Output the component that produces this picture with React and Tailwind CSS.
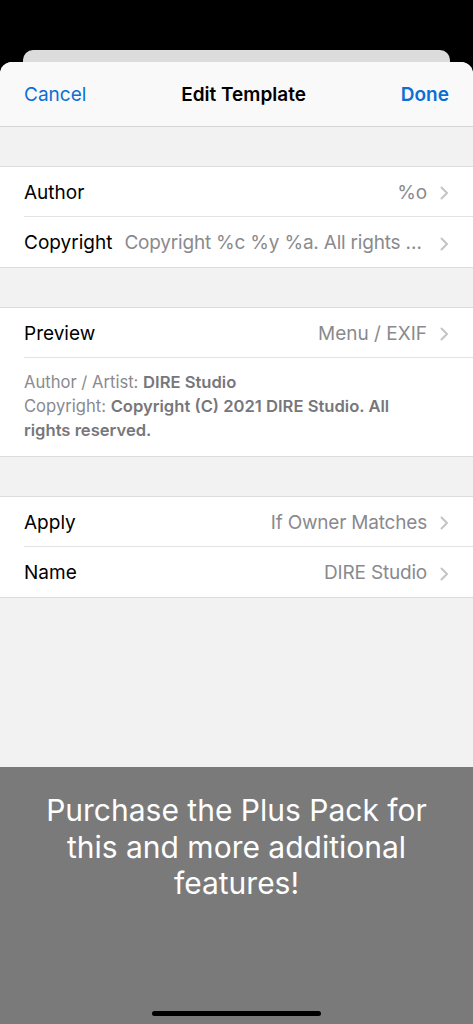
import React from 'react';

const Chevron = () => (
  <svg width="9" height="14" viewBox="0 0 9 14" className="ml-[13px] shrink-0" fill="none">
    <path d="M1.5 1.5L7 7l-5.5 5.5" stroke="#c4c4c7" strokeWidth="2" strokeLinecap="round" strokeLinejoin="round" />
  </svg>
);

const Row = ({ label, value, last }) => (
  <div className="flex h-[50px] items-center pl-6">
    <div className={`flex h-full min-w-0 flex-1 items-center pr-[24px] pt-[3px] ${last ? '' : 'border-b border-[#e3e3e6]'}`}>
      <span className="shrink-0 text-[19px] text-black">{label}</span>
      <span className="ml-3 min-w-0 flex-1 truncate text-right text-[19px] tracking-[-0.2px] text-[#8a8a8e]">{value}</span>
      <Chevron />
    </div>
  </div>
);

const Group = ({ children }) => (
  <div className="border-y border-[#dcdcdf] bg-white">{children}</div>
);

const App = () => {
  return (
    <div
      className="relative flex h-[1024px] w-[473px] flex-col overflow-hidden bg-black"
      style={{ fontFamily: 'Inter, "Liberation Sans", sans-serif' }}
    >
      <div className="mx-[23px] mt-[50px] h-[20px] rounded-t-[10px] bg-[#dcdcdc]" />
      <div className="-mt-[8px] flex flex-1 flex-col overflow-hidden rounded-t-[12px] bg-[#f2f2f2]">
        <div className="flex h-[65px] items-center justify-between border-b border-[#d6d6d8] bg-[#f9f9f9] px-6 pt-[3px]">
          <span className="text-[19px] text-[#0b6fd4]">Cancel</span>
          <span className="text-[19px] font-semibold text-black">Edit Template</span>
          <span className="text-[19px] font-semibold text-[#0b6fd4]">Done</span>
        </div>
        <div className="h-[39px]" />
        <Group>
          <Row label="Author" value="%o" />
          <Row label="Copyright" value="Copyright %c %y %a. All rights reserved." last />
        </Group>
        <div className="h-[39px]" />
        <Group>
          <div className="pl-6">
            <div className="flex h-[50px] items-center border-b border-[#e3e3e6] pr-[24px] pt-[3px]">
              <span className="text-[19px] text-black">Preview</span>
              <span className="flex-1 text-right text-[19px] text-[#8a8a8e]">Menu / EXIF</span>
              <Chevron />
            </div>
            <div className="pb-[14px] pr-[50px] pt-[12px] text-[16.6px] leading-[24px] text-[#8a8a8e]">
              Author / Artist: <span className="font-semibold text-[#77777b]">DIRE Studio</span>
              <br />
              Copyright: <span className="font-semibold text-[#77777b]">Copyright (C) 2021 DIRE Studio. All rights reserved.</span>
            </div>
          </div>
        </Group>
        <div className="h-[39px]" />
        <Group>
          <Row label="Apply" value="If Owner Matches" />
          <Row label="Name" value="DIRE Studio" last />
        </Group>
        <div className="flex-1" />
        <div className="flex h-[257px] flex-col items-center bg-[#7a7a7a] px-8 pt-[25px]">
          <p className="text-center text-[30px] leading-[36.5px] text-white">
            Purchase the Plus Pack for this and more additional features!
          </p>
          <div className="flex-1" />
          <div className="mb-[8px] h-[5px] w-[169px] rounded-full bg-black" />
        </div>
      </div>
    </div>
  );
};

export default App;
